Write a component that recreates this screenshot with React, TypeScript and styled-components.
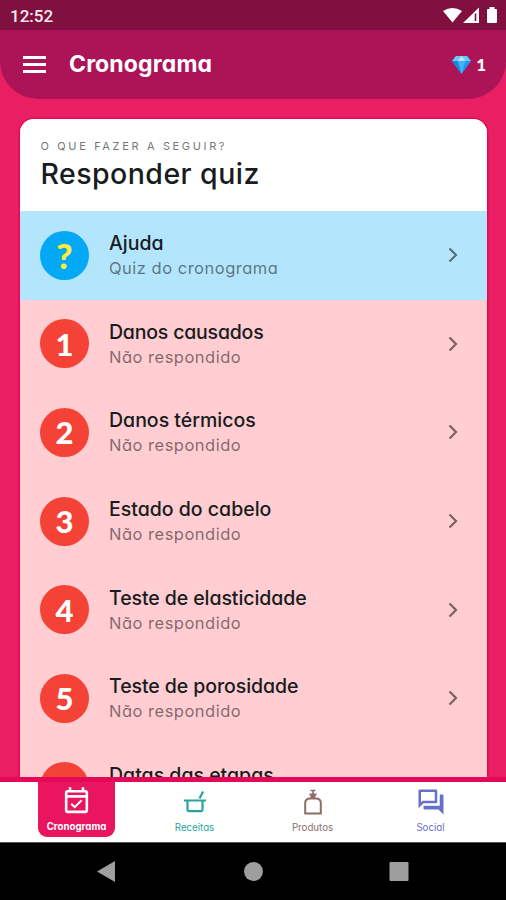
import React from "react";
import styled, { createGlobalStyle } from "styled-components";
import { MdOutlineEventAvailable, MdOutlineForum } from "react-icons/md";

const GlobalStyle = createGlobalStyle`
  * { box-sizing: border-box; }
  body { margin: 0; background: #e91e63; }
`;

const Screen = styled.div`
  width: 506px;
  height: 900px;
  overflow: hidden;
  display: flex;
  flex-direction: column;
  background: #e91e63;
  font-family: Inter, "Noto Sans", sans-serif;
  font-feature-settings: "cv11" 1, "ss03" 1;
  color: #181c20;
`;

const StatusBar = styled.div`
  height: 30px;
  flex: none;
  display: flex;
  align-items: center;
  justify-content: space-between;
  padding: 2px 7px 0 10px;
  background: #7f103f;
  color: #f8eaef;
  font: 500 17px/28px Roboto, sans-serif;
`;

const StatusIcons = styled.svg`
  display: block;
  width: 56px;
  height: 18px;
`;

const Header = styled.header`
  height: 69px;
  flex: none;
  display: flex;
  align-items: center;
  padding: 0 20px 0 23px;
  border-radius: 0 0 38px 38px;
  background: #ac1457;
  color: #fff;
`;

const MenuButton = styled.button`
  width: 24px;
  height: 17px;
  padding: 0;
  border: 0;
  background: none;
  display: flex;
  flex-direction: column;
  justify-content: space-between;

  span {
    width: 23px;
    height: 3px;
    background: #fff;
  }
`;

const Title = styled.h1`
  margin: -2px auto 0 22px;
  font-size: 23px;
  line-height: 30px;
  font-weight: 700;
  letter-spacing: 0.15px;
`;

const Gems = styled.div`
  display: flex;
  align-items: center;
  gap: 5px;
  font: 900 17px/20px Lato, sans-serif;
`;

const Body = styled.main`
  flex: 1;
  min-height: 0;
  display: flex;
  padding: 19.5px 19px 0 20px;
`;

const Card = styled.section`
  flex: 1;
  overflow: hidden;
  border-radius: 14px 14px 0 0;
  background: #ffcdd2;
  box-shadow: 0 0 0 1.5px #e5085a;
`;

const CardHead = styled.div`
  height: 92.5px;
  padding: 19px 20.5px 0;
  background: #fff;
`;

const Overline = styled.div`
  font-size: 11px;
  line-height: 17px;
  letter-spacing: 2.65px;
  color: #777;
`;

const Heading = styled.h2`
  margin: 0;
  font-size: 28.5px;
  line-height: 38px;
  font-weight: 550;
  letter-spacing: 0.45px;
`;

const Row = styled.div<{ $help?: boolean }>`
  height: 88.6px;
  display: flex;
  align-items: center;
  padding: 0 24.5px 0 20px;
  background: ${(p) => (p.$help ? "#b3e5fc" : "#ffcdd2")};
  color: ${(p) => (p.$help ? "#56717c" : "#7b6265")};
`;

const Badge = styled.div<{ $help?: boolean }>`
  width: 49px;
  height: 49px;
  flex: none;
  margin-right: 20px;
  border-radius: 50%;
  display: flex;
  align-items: center;
  justify-content: center;
  background: ${(p) => (p.$help ? "#03a9f4" : "#f44336")};
  color: ${(p) => (p.$help ? "#ffeb3b" : "#fff")};
  font-family: Lato, sans-serif;
  font-size: ${(p) => (p.$help ? 35 : 31)}px;
  font-weight: 900;
  line-height: 1;
  padding-top: 1px;
`;

const Texts = styled.div`
  flex: 1;
  padding-top: 1px;
  white-space: nowrap;
  color: #181c20;
`;

const ItemTitle = styled.div<{ $track: number }>`
  font-size: 19.5px;
  line-height: 26px;
  font-weight: 550;
  letter-spacing: ${(p) => p.$track}px;
`;

const ItemNote = styled.div`
  font-size: 16.5px;
  line-height: 25px;
  letter-spacing: 0.5px;
  color: rgba(0, 0, 0, 0.5);
`;

const Chevron = styled.svg`
  display: block;
  width: 20px;
  height: 20px;
`;

const Nav = styled.nav`
  height: 65px;
  flex: none;
  display: flex;
  padding: 0 16.5px 0 17.5px;
  border-top: 5px solid #e5085a;
  background: #fff;
`;

const Tab = styled.div`
  flex: 1;
  display: flex;
  justify-content: center;
`;

const TabInner = styled.div<{ $color: string; $active?: boolean }>`
  width: 77px;
  height: 55px;
  display: flex;
  flex-direction: column;
  align-items: center;
  padding-top: ${(p) => (p.$active ? 4 : 5)}px;
  border-radius: 0 0 9px 9px;
  background: ${(p) => (p.$active ? "#e9165f" : "transparent")};
  color: ${(p) => p.$color};
  font-size: 9.7px;
  font-weight: ${(p) => (p.$active ? 700 : 400)};
  line-height: 12px;

  svg {
    display: block;
    flex: none;
    margin-bottom: ${(p) => (p.$active ? 4 : 5)}px;
  }
`;

const SystemBar = styled.div`
  height: 58px;
  flex: none;
  display: flex;
  align-items: center;
  justify-content: center;
  background: #000;
  border-top: 1px solid #555;
`;

const items = [
  { badge: "?", title: "Ajuda", note: "Quiz do cronograma", track: 0, help: true },
  { badge: "1", title: "Danos causados", note: "Não respondido", track: -0.2 },
  { badge: "2", title: "Danos térmicos", note: "Não respondido", track: 0 },
  { badge: "3", title: "Estado do cabelo", note: "Não respondido", track: 0 },
  { badge: "4", title: "Teste de elasticidade", note: "Não respondido", track: -0.08 },
  { badge: "5", title: "Teste de porosidade", note: "Não respondido", track: -0.08 },
  { badge: "6", title: "Datas das etapas", note: "Não respondido", track: 0 },
];

const MortarIcon = () => (
  <svg width="30" height="30" viewBox="0 0 30 30" fill="none" stroke="currentColor" strokeWidth="2.2">
    <path d="M4 13.500h22M7.500 14v8.200q0 2 2 2h11q2 0 2-2V14M19.500 11.500l3.600-7" />
  </svg>
);

const BottleIcon = () => (
  <svg width="30" height="30" viewBox="0 0 30 30" fill="none" stroke="currentColor" strokeWidth="2">
    <path d="M7.200 26.500V16q0-4.500 5-4.500h5.600q5 0 5 4.500v10.500ZM11.500 7.500h7" />
    <path d="M12.500 3.500h5M15 3.500v4" strokeWidth="1.600" />
    <path d="M12.500 7.500h5v4h-5Z" fill="currentColor" stroke="none" />
  </svg>
);

const GemIcon = () => (
  <svg width="19" height="19" viewBox="0 0 19 19">
    <path d="M4 1h11l4 5-9.500 13L0 6Z" fill="#2196f3" />
    <path d="M4 1h11l4 5H0Z" fill="#6bc7fb" />
    <path d="M5.500 6h8l-4 13Z" fill="#3db4fb" />
    <path d="m9.500 1 4 5h-8Z" fill="#b5e6fd" />
    <path d="M0 6h5.500l4 13Z" fill="#1689df" />
  </svg>
);

export default function App() {
  return (
    <Screen>
      <GlobalStyle />
      <StatusBar>
        <span>12:52</span>
        <StatusIcons viewBox="0 0 56 18" fill="#fff">
          <path d="M0 4Q9.500-2 19 4L9.500 15.500Z" />
          <path d="M20 16 36 .5V16Z" />
          <path d="M31.700 6.500h1.600v7.500h-1.600Z" fill="#7f103f" />
          <path d="M46.500 0h5v2h1.500q1 0 1 1v12q0 1-1 1h-8q-1 0-1-1V3q0-1 1-1h1.500Z" />
        </StatusIcons>
      </StatusBar>
      <Header>
        <MenuButton aria-label="Menu">
          <span />
          <span />
          <span />
        </MenuButton>
        <Title>Cronograma</Title>
        <Gems>
          <GemIcon />
          <span>1</span>
        </Gems>
      </Header>
      <Body>
        <Card>
          <CardHead>
            <Overline>O QUE FAZER A SEGUIR?</Overline>
            <Heading>Responder quiz</Heading>
          </CardHead>
          {items.map((item) => (
            <Row key={item.badge} $help={item.help}>
              <Badge $help={item.help}>{item.badge}</Badge>
              <Texts>
                <ItemTitle $track={item.track}>{item.title}</ItemTitle>
                <ItemNote>{item.note}</ItemNote>
              </Texts>
              <Chevron viewBox="0 0 20 20" fill="none" stroke="currentColor" strokeWidth="2.2">
                <path d="m6.500 3.500 6.500 6.500-6.500 6.500" />
              </Chevron>
            </Row>
          ))}
        </Card>
      </Body>
      <Nav>
        <Tab>
          <TabInner $color="#fff" $active>
            <MdOutlineEventAvailable size={31} />
            Cronograma
          </TabInner>
        </Tab>
        <Tab>
          <TabInner $color="#26a699">
            <MortarIcon />
            Receitas
          </TabInner>
        </Tab>
        <Tab>
          <TabInner $color="#8d6e68">
            <BottleIcon />
            Produtos
          </TabInner>
        </Tab>
        <Tab>
          <TabInner $color="#6672c8">
            <MdOutlineForum size={30} />
            Social
          </TabInner>
        </Tab>
      </Nav>
      <SystemBar>
        <svg width="312" height="22" viewBox="0 0 312 22" fill="#9e9e9e">
          <path d="M0 10.500 18 0v21Z" />
          <circle cx="156.500" cy="10.500" r="9.500" />
          <rect x="292.500" y="1" width="19" height="19" rx="1" />
        </svg>
      </SystemBar>
    </Screen>
  );
}
